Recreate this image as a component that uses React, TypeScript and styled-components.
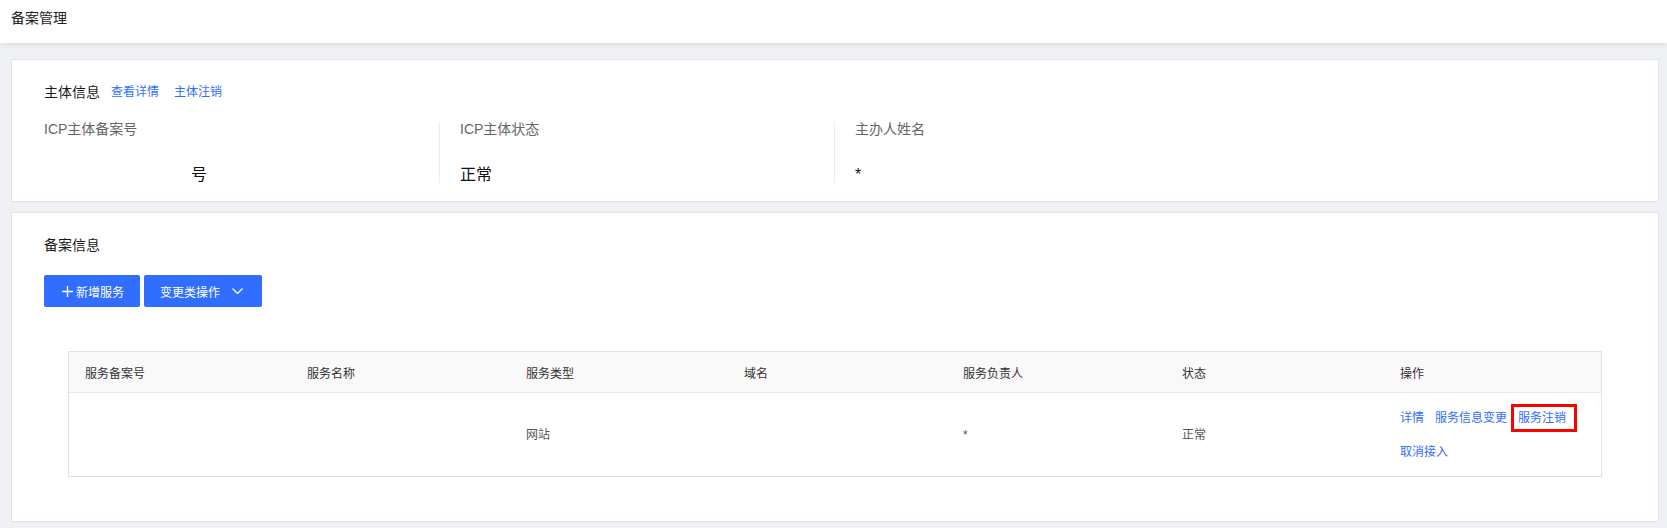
import React from 'react';
import styled, { createGlobalStyle } from 'styled-components';

const GlobalStyle = createGlobalStyle`
  html, body {
    margin: 0;
    padding: 0;
    background: #eef0f3;
    font-family: "Liberation Sans", "Noto Sans CJK SC", sans-serif;
    color: #333;
  }
`;

interface Column {
  title: string;
  width: string;
}

const columns: Array<Column> = [
  { title: '服务备案号', width: '222px' },
  { title: '服务名称', width: '219px' },
  { title: '服务类型', width: '218px' },
  { title: '域名', width: '219px' },
  { title: '服务负责人', width: '219px' },
  { title: '状态', width: '218px' },
  { title: '操作', width: '1fr' },
];

const gridTemplate = columns.map(c => c.width).join(' ');

const PlusIcon = () => (
  <svg width="11" height="11" viewBox="0 0 11 11">
    <path d="M5.5 0v11M0 5.5h11" stroke="#fff" strokeWidth="1.4" />
  </svg>
);

const ChevronDown = () => (
  <svg width="11" height="6" viewBox="0 0 11 6" fill="none">
    <path d="M0.5 0.5l5 5 5-5" stroke="#fff" strokeWidth="1.3" />
  </svg>
);

interface InfoItemProps {
  label: string;
  value: string;
  indent?: number;
}

const InfoItem = ({ label, value, indent = 0 }: InfoItemProps): JSX.Element => (
  <InfoCol>
    <InfoLabel>{label}</InfoLabel>
    <InfoValue indent={indent}>{value}</InfoValue>
  </InfoCol>
);

function App(): JSX.Element {
  return (
    <>
      <GlobalStyle />
      <TopBar>备案管理</TopBar>
      <Main>
        <Card>
          <CardTitle>
            主体信息
            <Link>查看详情</Link>
            <Link>主体注销</Link>
          </CardTitle>
          <InfoGrid>
            <InfoItem label="ICP主体备案号" value="号" indent={147} />
            <InfoItem label="ICP主体状态" value="正常" />
            <InfoItem label="主办人姓名" value="*" />
          </InfoGrid>
        </Card>

        <Card bottom={44}>
          <CardTitle>备案信息</CardTitle>
          <Toolbar>
            <PrimaryButton>
              <PlusIcon />
              新增服务
            </PrimaryButton>
            <PrimaryButton trailing>
              变更类操作
              <ChevronDown />
            </PrimaryButton>
          </Toolbar>

          <Table>
            <HeadRow>
              {columns.map(col => (
                <HeadCell key={col.title}>{col.title}</HeadCell>
              ))}
            </HeadRow>
            <BodyRow>
              <BodyCell />
              <BodyCell />
              <BodyCell>网站</BodyCell>
              <BodyCell />
              <BodyCell>*</BodyCell>
              <BodyCell>正常</BodyCell>
              <BodyCell>
                <Actions>
                  <Link>详情</Link>
                  <Link>服务信息变更</Link>
                  <Marked><Link>服务注销</Link></Marked>
                  <Link>取消接入</Link>
                </Actions>
              </BodyCell>
            </BodyRow>
          </Table>
        </Card>
      </Main>
    </>
  );
}

export default App;

const TopBar = styled.div`
  height: 43px;
  box-sizing: border-box;
  padding: 8px 11px 0;
  background: #fff;
  font-size: 14px;
  line-height: 20px;
  color: #222;
  box-shadow: 0 2px 5px rgba(0, 0, 0, 0.07);
  position: relative;
`;

const Main = styled.div`
  display: flex;
  flex-direction: column;
  gap: 10px;
  padding: 16px 8px 5px 11px;
`;

const Card = styled.section<{ bottom?: number }>`
  background: #fff;
  border: 1px solid #dde3ea;
  padding: 22px 32px ${({ bottom }) => bottom ?? 18}px;
`;

const CardTitle = styled.div`
  display: flex;
  align-items: center;
  gap: 11px;
  font-size: 14px;
  line-height: 20px;
  color: #1a1a1a;

  a + a {
    margin-left: 4px;
  }
`;

const Link = styled.a`
  font-size: 12px;
  line-height: 20px;
  color: #306eff;
  cursor: pointer;
  white-space: nowrap;
`;

const InfoGrid = styled.div`
  display: grid;
  grid-template-columns: 395px 395px 395px;
  margin-top: 20px;
`;

const InfoCol = styled.div`
  display: flex;
  flex-direction: column;
  gap: 31px;

  & + & {
    border-left: 1px solid #eaedf0;
    padding-left: 20px;
  }
`;

const InfoLabel = styled.div`
  font-size: 14px;
  line-height: 14px;
  color: #666;
`;

const InfoValue = styled.div<{ indent: number }>`
  font-size: 16px;
  line-height: 16px;
  color: #111;
  padding-left: ${({ indent }) => indent}px;
`;

const Toolbar = styled.div`
  display: flex;
  gap: 4px;
  margin-top: 20px;
`;

const PrimaryButton = styled.button<{ trailing?: boolean }>`
  display: flex;
  align-items: center;
  gap: ${({ trailing }) => (trailing ? 12 : 3)}px;
  height: 32px;
  padding: 0 ${({ trailing }) => (trailing ? 19 : 16)}px 0 ${({ trailing }) => (trailing ? 16 : 18)}px;
  border: none;
  border-radius: 2px;
  background: #306eff;
  color: #fff;
  font-family: inherit;
  font-size: 12px;
  cursor: pointer;
`;

const Table = styled.div`
  margin: 44px 24px 0;
  border: 1px solid #e2e2e2;
`;

const HeadRow = styled.div`
  display: grid;
  grid-template-columns: ${gridTemplate};
  height: 40px;
  align-items: center;
  background: #f9f9f9;
  border-bottom: 1px solid #e8e8e8;
`;

const HeadCell = styled.div`
  padding-left: 16px;
  font-size: 12px;
  color: #333;
`;

const BodyRow = styled.div`
  display: grid;
  grid-template-columns: ${gridTemplate};
  height: 83px;
  align-items: center;
`;

const BodyCell = styled.div`
  padding-left: 16px;
  font-size: 12px;
  line-height: 20px;
  color: #555;
`;

const Actions = styled.div`
  display: flex;
  flex-wrap: wrap;
  column-gap: 11px;
  row-gap: 14px;
  padding-top: 1px;
`;

const Marked = styled.span`
  position: relative;
  display: inline-flex;

  &::after {
    content: '';
    position: absolute;
    left: -7px;
    right: -11px;
    top: -4px;
    bottom: -4px;
    border: 3px solid #ff0000;
  }
`;
